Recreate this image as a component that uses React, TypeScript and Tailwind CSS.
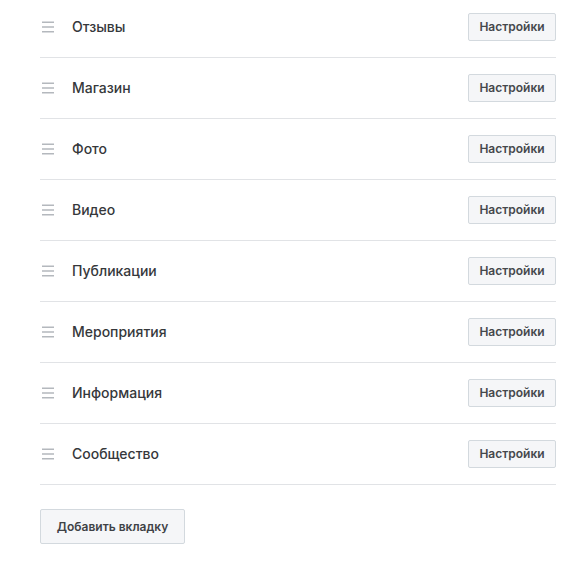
const TABS = [
  'Отзывы',
  'Магазин',
  'Фото',
  'Видео',
  'Публикации',
  'Мероприятия',
  'Информация',
  'Сообщество',
]

function DragHandle() {
  return (
    <svg width="12" height="12" viewBox="0 0 12 12" className="shrink-0">
      <rect x="0" y="0.5" width="12" height="1.5" fill="#b4b8bd" />
      <rect x="0" y="5.25" width="12" height="1.5" fill="#b4b8bd" />
      <rect x="0" y="10" width="12" height="1.5" fill="#b4b8bd" />
    </svg>
  )
}

export default function App() {
  return (
    <div className="w-[586px] h-[564px] bg-white overflow-hidden font-['Inter',sans-serif]">
      <div className="pl-10 w-[556px] -mt-[3px]">
        {TABS.map((tab) => (
          <div
            key={tab}
            className="flex items-center h-[61px] border-b border-[#e1e3e6]"
          >
            <div className="ml-[2px] w-[30px]">
              <DragHandle />
            </div>
            <span className="flex-1 pb-[2px] text-[14px] font-medium text-[#36383b]">{tab}</span>
            <button className="w-[88px] h-[28px] rounded-[2px] border border-[#d3d9de] bg-[#f5f6f8] text-[12px] font-semibold text-[#45484c]">
              Настройки
            </button>
          </div>
        ))}
        <button className="mt-6 w-[145px] h-[35px] rounded-[2px] border border-[#d3d9de] bg-[#f5f6f8] text-[12px] font-semibold text-[#3f4246]">
          Добавить вкладку
        </button>
      </div>
    </div>
  )
}
